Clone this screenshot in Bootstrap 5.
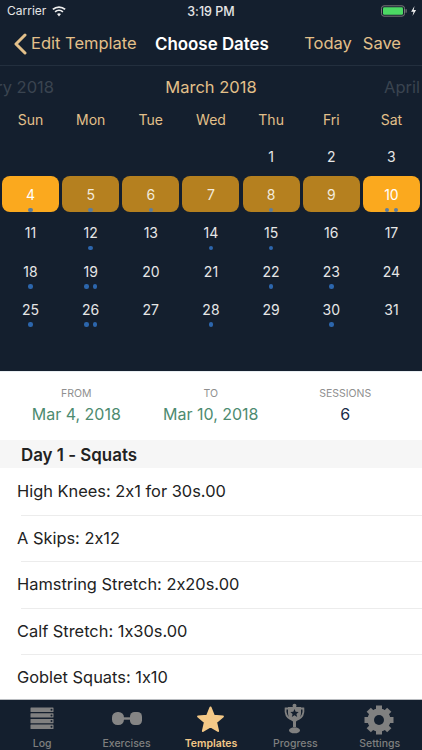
<!DOCTYPE html>
<html lang="en"><head><meta charset="utf-8"><title>Choose Dates</title>
<link href="https://cdn.jsdelivr.net/npm/bootstrap@5.3.0/dist/css/bootstrap.min.css" rel="stylesheet">
<style>
html,body{height:100%;}
body{width:422px;height:750px;overflow:hidden;font-family:Inter,"Liberation Sans",sans-serif;font-feature-settings:"calt" 0;background:#fff;color:#222;}
.app-shell{height:750px;}
.dark-top{background:#141f2e;height:371px;flex:none;color:#e8e8e8;}
.status-row{height:22px;padding:0 4px 0 7px;font-size:12px;color:#e6e6e6;position:relative;}
.status-carrier{gap:6px;}
.status-time{position:absolute;left:0;right:0;top:3px;text-align:center;font-weight:500;font-size:12.5px;}
.nav-row{height:44px;border-bottom:1px solid #232f3e;font-size:16.5px;color:#e3c08a;padding:0 21px 0 13px;position:relative;}
.nav-title{position:absolute;left:155px;top:10px;font-weight:600;color:#fff;font-size:16.9px;white-space:nowrap;}
.nav-actions{gap:11px;}
.month-row{display:grid;grid-template-columns:54px 314px auto;height:43px;align-items:center;font-size:16.5px;white-space:nowrap;overflow:hidden;}
.month-prev{direction:rtl;overflow:hidden;color:#3a4450;}
.month-now{text-align:center;color:#e3c08a;}
.month-next{margin-left:16px;color:#3a4450;}
.week-row,.day-grid{display:grid;grid-template-columns:repeat(7,57px);column-gap:3.17px;padding:0 2px;text-align:center;}
.week-row{font-size:14px;color:#e3c08a;height:29px;line-height:22px;}
.day-grid{row-gap:2.2px;font-size:14px;color:#e6e6e6;}
.day-cell{height:36px;border-radius:8px;padding-top:9px;display:flex;flex-direction:column;align-items:center;}
.day-num{line-height:20px;height:20px;}
.day-dots{display:flex;gap:4.2px;margin-top:2.5px;height:5px;}
.day-dots i{display:block;width:4.5px;height:4.5px;border-radius:50%;background:#2c66ad;}
.sel-end{background:#fba91e;color:#fff;}
.sel-mid{background:#b5801f;color:#f2ebdd;}
.sel-end .day-dots i,.sel-mid .day-dots i{background:#5d7d9c;}
.summary-row{height:69px;flex:none;padding-top:15px;padding-left:9px;border-top:1px solid #e9eef2;}
.sum-col{width:134.5px;text-align:center;}
.sum-label{font-size:10.5px;color:#8f8f8f;line-height:14px;}
.sum-value{font-size:16px;color:#4d8b70;line-height:26px;}
.sum-navy{color:#1b2c4a;}
.day-head{height:28px;flex:none;background:#f6f6f6;padding-left:21px;font-weight:600;font-size:16.9px;line-height:30px;color:#222;}
.ex-row{height:46.6px;flex:none;margin-left:21px;border-bottom:1px solid #ececec;font-size:16.4px;line-height:44px;color:#222;}
.ex-row span{margin-left:-4px;}
.ex-row:last-child{border-bottom:0;}
.ex-list{flex:1 1 auto;min-height:0;overflow:hidden;padding-top:1px;}
.tab-strip{height:51px;flex:none;background:#141f2e;border-top:1px solid #b9bcc0;}
.tab-item{width:84.4px;flex:none;position:relative;text-align:center;font-size:10.5px;color:#7f7f7f;font-weight:500;}
.tab-on{color:#f3c888;font-weight:600;}
.tab-icon{display:block;height:37px;margin:0 auto;}
.tab-text{line-height:12px;margin-top:1px;white-space:nowrap;}
</style></head><body>
<div class="app-shell d-flex flex-column">
 <div class="dark-top">
  <div class="status-row d-flex align-items-center justify-content-between">
   <div class="d-flex align-items-center status-carrier"><span>Carrier</span>
    <svg width="14" height="11" viewBox="0 0 15 11"><path d="M7.5 10.800 5.400 8.300a3.200 3.200 0 0 1 4.200 0zM3.900 6.600 2.700 5.200a7.300 7.300 0 0 1 9.600 0l-1.200 1.400a5.500 5.500 0 0 0-7.200 0zM1.600 3.900.3 2.500a10.900 10.900 0 0 1 14.400 0l-1.300 1.400a9 9 0 0 0-11.800 0z" fill="#f0f0f0"/></svg></div>
   <div class="status-time">3:19 PM</div>
   <svg width="37" height="12" viewBox="0 0 37 12"><rect x=".5" y=".8" width="23" height="10.400" rx="2.500" fill="none" stroke="#777"/><rect x="2" y="2.200" width="20" height="7.600" rx="1.300" fill="#4cd964"/><rect x="24.500" y="4.200" width="1.200" height="3.500" fill="#777"/><path d="M33.500 1 30.100 6.800h2.400L31.500 11l3.600-6h-2.400z" fill="#eee"/></svg>
  </div>
  <div class="nav-row d-flex align-items-center justify-content-between">
   <div class="d-flex align-items-center gap-1">
    <svg width="14" height="22" viewBox="0 0 14 22"><path d="M12 2 3 11l9 9" fill="none" stroke="#e3c08a" stroke-width="3" stroke-linecap="round" stroke-linejoin="round"/></svg>
    <span>Edit Template</span></div>
   <div class="nav-title">Choose Dates</div>
   <div class="d-flex nav-actions"><span>Today</span><span>Save</span></div>
  </div>
  <div class="month-row"><div class="month-prev">&lrm;February 2018</div><div class="month-now">March 2018</div><div class="month-next">April 2018</div></div>
  <div class="week-row"><div>Sun</div><div>Mon</div><div>Tue</div><div>Wed</div><div>Thu</div><div>Fri</div><div>Sat</div></div>
  <div class="day-grid" id="dayGrid"></div>
 </div>
 <div class="summary-row d-flex">
  <div class="sum-col"><div class="sum-label">FROM</div><div class="sum-value">Mar 4, 2018</div></div>
  <div class="sum-col"><div class="sum-label">TO</div><div class="sum-value">Mar 10, 2018</div></div>
  <div class="sum-col"><div class="sum-label">SESSIONS</div><div class="sum-value sum-navy">6</div></div>
 </div>
 <div class="day-head">Day 1 - Squats</div>
 <div class="ex-list">
  <div class="ex-row"><span>High Knees: 2x1 for 30s.00</span></div>
  <div class="ex-row"><span>A Skips: 2x12</span></div>
  <div class="ex-row"><span>Hamstring Stretch: 2x20s.00</span></div>
  <div class="ex-row"><span>Calf Stretch: 1x30s.00</span></div>
  <div class="ex-row"><span>Goblet Squats: 1x10</span></div>
 </div>
 <div class="tab-strip d-flex">
  <div class="tab-item"><svg class="tab-icon" width="30" height="37" viewBox="0 0 30 37" fill="#808080"><rect x="3.500" y="7.500" width="23" height="4.400" rx=".5"/><rect x="3.500" y="13.200" width="23" height="4.400" rx=".5"/><rect x="3.500" y="18.900" width="23" height="4.400" rx=".5"/><rect x="3.500" y="24.600" width="23" height="4.400" rx=".5"/><g fill="#141f2e"><circle cx="24.500" cy="9.700" r="1"/><circle cx="24.500" cy="15.400" r="1"/><circle cx="24.500" cy="21.100" r="1"/><circle cx="24.500" cy="26.800" r="1"/></g></svg><div class="tab-text">Log</div></div>
  <div class="tab-item"><svg class="tab-icon" width="36" height="37" viewBox="0 0 36 37" fill="#858585"><rect x="3" y="12" width="12" height="13" rx="5.500"/><rect x="21" y="12" width="12" height="13" rx="4.500"/><rect x="14" y="17.300" width="8" height="2.400"/></svg><div class="tab-text">Exercises</div></div>
  <div class="tab-item tab-on"><svg class="tab-icon" width="34" height="37" viewBox="0 0 34 37"><path d="M16.500 7.500l3.400 8.300 9 .7-6.800 5.800 2 8.700-7.600-4.700-7.600 4.700 2-8.700-6.800-5.800 9-.7z" fill="#f5c987" stroke="#f5c987" stroke-width="2" stroke-linejoin="round"/></svg><div class="tab-text">Templates</div></div>
  <div class="tab-item"><svg class="tab-icon" width="24" height="37" viewBox="0 0 24 37"><circle cx="11.500" cy="5.800" r="2" fill="#808080"/><path d="M5 7h13v6c0 4.500-3 7.500-5 8.500V27h-3v-5.500C8 20.500 5 17.500 5 13z" fill="#808080"/><path d="M5 8.500H2.600c-.6 5 1.600 9 5.400 11M18 8.500h2.400c.6 5-1.600 9-5.400 11" fill="none" stroke="#808080" stroke-width="1.800"/><ellipse cx="11.500" cy="30.300" rx="5.500" ry="3" fill="#808080"/><path d="M11.500 9l1.200 2.800 3 .2-2.300 1.900.8 3-2.700-1.600-2.700 1.600.8-3L7.300 12l3-.2z" fill="#141f2e"/></svg><div class="tab-text">Progress</div></div>
  <div class="tab-item"><svg class="tab-icon" width="34" height="37" viewBox="0 0 34 37"><circle cx="16" cy="20" r="8.500" fill="none" stroke="#808080" stroke-width="6"/><g fill="#808080"><rect x="13" y="5.500" width="6" height="29"/><rect x="13" y="5.500" width="6" height="29" transform="rotate(45 16 20)"/><rect x="13" y="5.500" width="6" height="29" transform="rotate(90 16 20)"/><rect x="13" y="5.500" width="6" height="29" transform="rotate(135 16 20)"/></g><circle cx="16" cy="20" r="5" fill="#141f2e"/></svg><div class="tab-text">Settings</div></div>
 </div>
</div>
<script>
var dots={4:1,5:1,6:1,8:1,10:2,12:1,14:1,15:1,18:1,19:2,22:1,23:1,25:1,26:2,28:1,30:1};
var h='';for(var i=0;i<4;i++)h+='<div class="day-cell"></div>';
for(var d=1;d<=31;d++){var c=(d==4||d==10)?' sel-end':(d>4&&d<10)?' sel-mid':'';var t='';for(var k=0;k<(dots[d]||0);k++)t+='<i></i>';
h+='<div class="day-cell'+c+'"><div class="day-num">'+d+'</div><div class="day-dots">'+t+'</div></div>';}
document.getElementById('dayGrid').innerHTML=h;
</script>
<script src="https://cdn.jsdelivr.net/npm/bootstrap@5.3.0/dist/js/bootstrap.bundle.min.js"></script>
</body></html>
